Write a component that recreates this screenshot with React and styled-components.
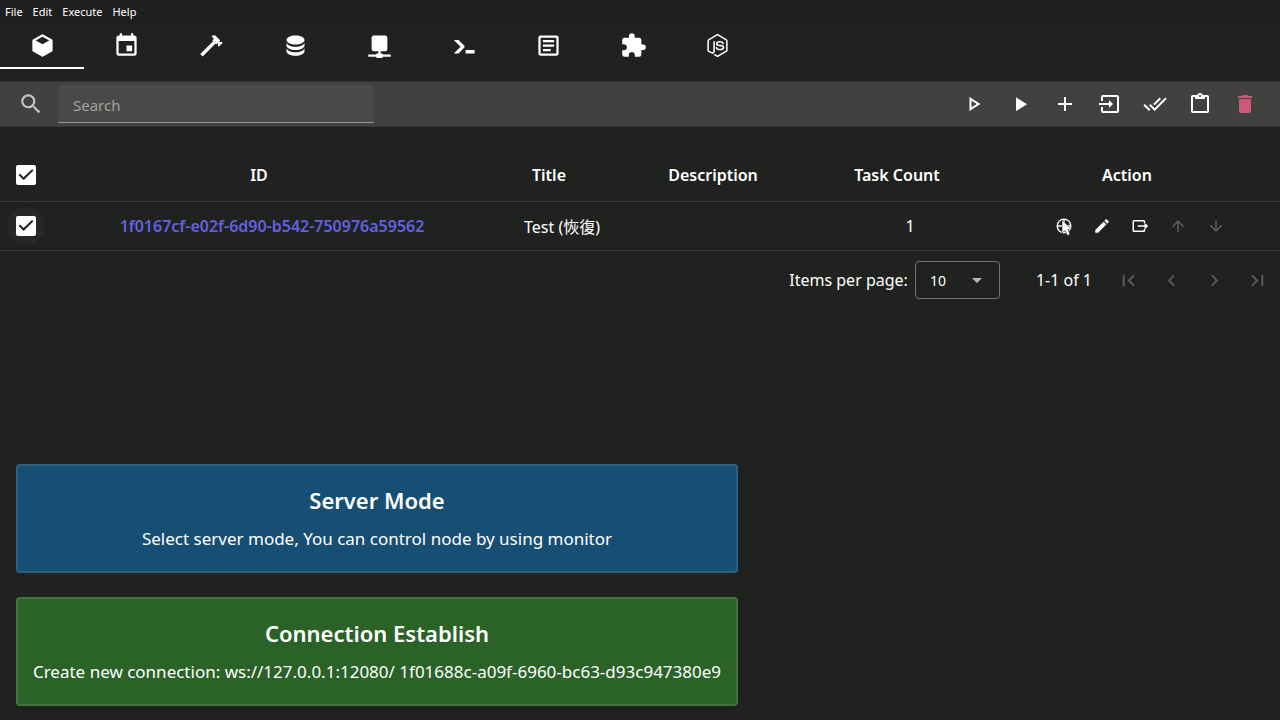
import React from "react";
import styled, { createGlobalStyle } from "styled-components";

const GlobalStyle = createGlobalStyle`
  *, *::before, *::after { box-sizing: border-box; }
  body {
    margin: 0;
    background: #20221f;
    color: #fff;
    font-family: "Noto Sans", "Noto Sans CJK TC", sans-serif;
    font-size: 16px;
  }
  button, input, select { font: inherit; color: inherit; }
`;

const paths = {
  cube: "M21,16.5C21,16.88 20.79,17.21 20.47,17.38L12.57,21.82C12.41,21.94 12.21,22 12,22C11.79,22 11.59,21.94 11.43,21.82L3.53,17.38C3.21,17.21 3,16.88 3,16.5V7.5C3,7.12 3.21,6.79 3.53,6.62L11.43,2.18C11.59,2.06 11.79,2 12,2C12.21,2 12.41,2.06 12.57,2.18L20.47,6.62C20.79,6.79 21,7.12 21,7.5V16.5M12,4.15L6.04,7.5L12,10.85L17.96,7.5L12,4.15Z",
  calendar: "M19,19H5V8H19M16,1V3H8V1H6V3H5C3.89,3 3,3.89 3,5V19A2,2 0 0,0 5,21H19A2,2 0 0,0 21,19V5C21,3.89 20.1,3 19,3H18V1M17,12H12V17H17V12Z",
  hammer: "M2,19.63L13.43,8.2L12.72,7.5L14.14,6.07L12,3.89C13.2,2.7 15.09,2.7 16.27,3.89L19.87,7.5L18.45,8.91H21.29L22,9.62L18.45,13.21L17.74,12.5V9.62L16.27,11.04L15.56,10.33L4.13,21.76L2,19.63Z",
  database: "M12,3C7.58,3 4,4.79 4,7C4,9.21 7.58,11 12,11C16.42,11 20,9.21 20,7C20,4.79 16.42,3 12,3M4,9V12C4,14.21 7.58,16 12,16C16.42,16 20,14.21 20,12V9C20,11.21 16.42,13 12,13C7.58,13 4,11.21 4,9M4,14V17C4,19.21 7.58,21 12,21C16.42,21 20,19.21 20,17V14C20,16.21 16.42,18 12,18C7.58,18 4,16.21 4,14Z",
  network: "M17,3A2,2 0 0,1 19,5V15A2,2 0 0,1 17,17H13V19H14A1,1 0 0,1 15,20H22V22H15A1,1 0 0,1 14,23H10A1,1 0 0,1 9,22H2V20H9A1,1 0 0,1 10,19H11V17H7C5.89,17 5,16.1 5,15V5A2,2 0 0,1 7,3H17Z",
  console: "M13,19V16H21V19H13M8.5,13L2.47,7H6.71L11.67,11.95C12.25,12.54 12.25,13.5 11.67,14.07L6.74,19H2.5L8.5,13Z",
  log: "M5,3C3.89,3 3,3.89 3,5V19C3,20.11 3.89,21 5,21H19C20.11,21 21,20.11 21,19V5C21,3.89 20.11,3 19,3H5M5,5H19V19H5V5M7,7V9H17V7H7M7,11V13H17V11H7M7,15V17H14V15H7Z",
  puzzle: "M20.5,11H19V7C19,5.89 18.1,5 17,5H13V3.5A2.5,2.5 0 0,0 10.5,1A2.5,2.5 0 0,0 8,3.5V5H4A2,2 0 0,0 2,7V10.8H3.5C5,10.8 6.2,12 6.2,13.5C6.2,15 5,16.2 3.5,16.2H2V20A2,2 0 0,0 4,22H7.8V20.5C7.8,19 9,17.8 10.5,17.8C12,17.8 13.2,19 13.2,20.5V22H17A2,2 0 0,0 19,20V16H20.5A2.5,2.5 0 0,0 23,13.5A2.5,2.5 0 0,0 20.5,11Z",
  nodejs: "M12,1.85C11.73,1.85 11.45,1.92 11.22,2.05L3.78,6.35C3.3,6.63 3,7.15 3,7.71V16.29C3,16.85 3.3,17.37 3.78,17.65L5.73,18.77C6.68,19.23 7,19.24 7.44,19.24C8.84,19.24 9.65,18.39 9.65,16.91V8.44C9.65,8.32 9.55,8.22 9.43,8.22H8.5C8.37,8.22 8.27,8.32 8.27,8.44V16.91C8.27,17.57 7.59,18.22 6.5,17.67L4.45,16.5C4.38,16.45 4.34,16.37 4.34,16.29V7.71C4.34,7.62 4.38,7.54 4.45,7.5L11.89,3.21C11.95,3.17 12.05,3.17 12.11,3.21L19.55,7.5C19.62,7.54 19.66,7.62 19.66,7.71V16.29C19.66,16.37 19.62,16.46 19.55,16.5L12.11,20.79C12.05,20.83 11.95,20.83 11.88,20.79L10,19.65C9.92,19.62 9.84,19.61 9.79,19.64C9.26,19.94 9.16,20 8.67,20.14C8.55,20.18 8.36,20.26 8.74,20.47L11.22,21.94C11.46,22.08 11.72,22.15 12,22.15C12.28,22.15 12.54,22.08 12.78,21.94L20.22,17.65C20.7,17.37 21,16.85 21,16.29V7.71C21,7.15 20.7,6.63 20.22,6.35L12.78,2.05C12.55,1.92 12.28,1.85 12,1.85M14,8C11.88,8 10.61,8.89 10.61,10.39C10.61,12 11.87,12.47 13.91,12.67C16.34,12.91 16.53,13.27 16.53,13.75C16.53,14.58 15.86,14.93 14.3,14.93C12.32,14.93 11.9,14.44 11.75,13.46C11.73,13.36 11.64,13.28 11.53,13.28H10.57C10.45,13.28 10.36,13.37 10.36,13.5C10.36,14.74 11.04,16.24 14.3,16.24C16.65,16.24 18,15.31 18,13.69C18,12.08 16.92,11.66 14.63,11.35C12.32,11.05 12.09,10.89 12.09,10.35C12.09,9.9 12.29,9.3 14,9.3C15.5,9.3 16.09,9.63 16.32,10.66C16.34,10.76 16.43,10.83 16.53,10.83H17.5C17.55,10.83 17.61,10.81 17.65,10.76C17.69,10.72 17.72,10.66 17.7,10.6C17.56,8.82 16.38,8 14,8Z",
  magnify: "M9.5,3A6.5,6.5 0 0,1 16,9.5C16,11.11 15.41,12.59 14.44,13.73L14.71,14H15.5L20.5,19L19,20.5L14,15.5V14.71L13.73,14.44C12.59,15.41 11.11,16 9.5,16A6.5,6.5 0 0,1 3,9.5A6.5,6.5 0 0,1 9.5,3M9.5,5C7,5 5,7 5,9.5C5,12 7,14 9.5,14C12,14 14,12 14,9.5C14,7 12,5 9.5,5Z",
  playOutline: "M8.5,8.64L13.77,12L8.5,15.36V8.64M6.5,5V19L17.5,12",
  play: "M8,5.14V19.14L19,12.14L8,5.14Z",
  plus: "M19,13H13V19H11V13H5V11H11V5H13V11H19V13Z",
  enter: "M19,3H5C3.89,3 3,3.89 3,5V9H5V5H19V19H5V15H3V19A2,2 0 0,0 5,21H19A2,2 0 0,0 21,19V5C21,3.89 20.1,3 19,3M11,16L15,12L11,8V11H1V13H11V16Z",
  checkAll: "M0.41,13.41L6,19L7.41,17.58L1.83,12M22.24,5.58L11.66,16.17L7.5,12L6.07,13.41L11.66,19L23.66,7M18,7L16.59,5.58L10.24,11.93L11.66,13.34L18,7Z",
  clipboard: "M19,3H14.82C14.4,1.84 13.3,1 12,1C10.7,1 9.6,1.84 9.18,3H5A2,2 0 0,0 3,5V19A2,2 0 0,0 5,21H19A2,2 0 0,0 21,19V5A2,2 0 0,0 19,3M12,3A1,1 0 0,1 13,4A1,1 0 0,1 12,5A1,1 0 0,1 11,4A1,1 0 0,1 12,3M7,7H17V5H19V19H5V5H7V7Z",
  trash: "M19,4H15.5L14.5,3H9.5L8.5,4H5V6H19M6,19A2,2 0 0,0 8,21H16A2,2 0 0,0 18,19V7H6V19Z",
  target: "M12,2A10,10 0 1,0 12,22A10,10 0 1,0 12,2M13,4.1A8,8 0 0,1 19.9,11H13V4.1M11,4.1V11H4.1A8,8 0 0,1 11,4.1M4.1,13H11V19.9A8,8 0 0,1 4.1,13M13,19.9V13H19.9A8,8 0 0,1 13,19.9Z",
  pencil: "M20.71,7.04C21.1,6.65 21.1,6 20.71,5.63L18.37,3.29C18,2.9 17.35,2.9 16.96,3.29L15.12,5.12L18.87,8.87M3,17.25V21H6.75L17.81,9.93L14.06,6.18L3,17.25Z",
  exit: "M19,16V18A2,2 0 0,1 17,20H4A2,2 0 0,1 2,18V6A2,2 0 0,1 4,4H17A2,2 0 0,1 19,6V8H17V6H4V18H17V16H19M18,16.5V13H9V11H18V7.5L23,12L18,16.5Z",
  arrowUp: "M13,20H11V8L5.5,13.5L4.08,12.08L12,4.16L19.92,12.08L18.5,13.5L13,8V20Z",
  arrowDown: "M11,4H13V16L18.5,10.5L19.92,11.92L12,19.84L4.08,11.92L5.5,10.5L11,16V4Z",
  first: "M18.41,16.59L13.82,12L18.41,7.41L17,6L11,12L17,18L18.41,16.59M6,6H8V18H6V6Z",
  left: "M15.41,16.58L10.83,12L15.41,7.41L14,6L8,12L14,18L15.41,16.58Z",
  right: "M8.59,16.58L13.17,12L8.59,7.41L10,6L16,12L10,18L8.59,16.58Z",
  last: "M5.59,7.41L10.18,12L5.59,16.59L7,18L13,12L7,6L5.59,7.41M16,6H18V18H16V6Z",
  menuDown: "M7,10L12,15L17,10H7Z",
};

const Svg = styled.svg`
  display: block;
  flex: none;
  width: ${(p) => p.$size}px;
  height: ${(p) => p.$size}px;
  fill: currentColor;
  pointer-events: none;
`;
const Icon = ({ name, size = 24 }) => (
  <Svg $size={size} viewBox="0 0 24 24" aria-hidden="true">
    <path d={paths[name]} />
  </Svg>
);

const Page = styled.div`
  display: flex;
  flex-direction: column;
  min-height: 100vh;
`;
const MenuBar = styled.nav`
  display: flex;
  height: 24px;
  background: #1e201d;
`;
const MenuItem = styled.button`
  padding: 0 5px;
  border: 0;
  background: none;
  font-size: 11px;
  line-height: 22px;
`;
const Tabs = styled.nav`
  display: flex;
  width: 100%;
  max-width: 760px;
  height: 45px;
`;
const Tab = styled.button`
  flex: 1;
  display: flex;
  align-items: center;
  justify-content: center;
  padding: 0;
  border: 0;
  border-bottom: 2px solid ${(p) => (p.$active ? "#fff" : "transparent")};
  background: none;
`;
const Toolbar = styled.header`
  display: flex;
  align-items: center;
  height: 46px;
  margin-top: 12px;
  padding: 0 13px 0 18px;
  background: #40423f;
  border: solid #343633;
  border-width: 1px 0;
`;
const SearchLabel = styled.label`
  display: flex;
  align-items: center;
  gap: 14px;
  flex: 0 1 356px;
  color: #c4c5c4;
`;
const SearchInput = styled.input`
  flex: 1;
  min-width: 0;
  height: 38px;
  padding: 2px 15px 0;
  border: 0;
  border-bottom: 1px solid #949594;
  border-radius: 4px 4px 0 0;
  background: #494b48;
  color: #fff;
  font-size: 15px;
  outline: none;
  &::placeholder { color: #a0a19f; opacity: 1; }
`;
const ToolGroup = styled.div`
  display: flex;
  margin-left: auto;
`;
const ToolButton = styled.button`
  display: flex;
  align-items: center;
  justify-content: center;
  width: 45px;
  height: 44px;
  padding: 0;
  border: 0;
  background: none;
  color: ${(p) => (p.$danger ? "#cb5a7a" : "#fff")};
`;
const Table = styled.table`
  width: 100%;
  margin-top: 22px;
  border-collapse: collapse;
  table-layout: fixed;
`;
const Col = styled.col`
  width: ${(p) => p.$w}px;
`;
const HeadCell = styled.th`
  height: 52px;
  padding: 0 ${(p) => (p.$sortable ? 26 : 0)}px 0 0;
  border-bottom: 1px solid #393b38;
  font-weight: 600;
`;
const Cell = styled.td`
  height: 49px;
  padding: 0;
  border-bottom: 1px solid #393b38;
  text-align: center;
`;
const CheckHolder = styled.label`
  display: flex;
  align-items: center;
  justify-content: center;
  width: 38px;
  height: 38px;
  margin-left: 7px;
  border-radius: 50%;
  background: ${(p) => (p.$hover ? "#262825" : "none")};
`;
const Check = styled.input`
  appearance: none;
  width: 20px;
  height: 20px;
  margin: 0;
  border-radius: 2px;
  background: #fff;
  display: grid;
  place-items: center;
  &:checked::before {
    content: "";
    width: 15px;
    height: 11px;
    background: #20221f;
    clip-path: polygon(0 52%, 10% 40%, 34% 72%, 90% 0, 100% 11%, 34% 100%);
  }
`;
const IdLink = styled.a`
  color: #6461e0;
  font-weight: 600;
  text-decoration: none;
`;
const Actions = styled.div`
  display: flex;
  justify-content: center;
`;
const ActionSlot = styled.div`
  position: relative;
  flex: 0 0 38px;
`;
const ActionButton = styled.button`
  display: flex;
  align-items: center;
  justify-content: center;
  width: 100%;
  height: 38px;
  padding: 0;
  border: 0;
  background: none;
  color: #fff;
  &:disabled { color: #5b5d5a; }
`;
const Pointer = styled.svg`
  position: absolute;
  left: 16px;
  top: 12px;
  width: 14px;
  height: 18px;
`;
const Footer = styled.footer`
  display: flex;
  align-items: center;
  justify-content: flex-end;
  height: 59px;
  padding-right: 1px;
`;
const PerPage = styled.label`
  display: flex;
  align-items: center;
  gap: 7px;
`;
const SelectBox = styled.span`
  display: grid;
  align-items: center;
  width: 85px;
  height: 38px;
  border: 1px solid #737472;
  border-radius: 4px;
  color: #b9bab8;
  > * { grid-area: 1 / 1; }
  > svg { justify-self: end; margin-right: 10px; }
`;
const Select = styled.select`
  appearance: none;
  width: 100%;
  height: 36px;
  padding: 0 14px;
  border: 0;
  background: none;
  color: #fff;
  font-size: 14px;
`;
const PageInfo = styled.span`
  margin: 0 15px 0 36px;
`;
const Pager = styled.div`
  display: flex;
`;
const PagerButton = styled(ActionButton)`
  width: 43px;
`;
const Alerts = styled.section`
  display: flex;
  flex-direction: column;
  gap: 24px;
  width: 722px;
  max-width: calc(100% - 32px);
  margin: auto 0 14px 16px;
`;
const Alert = styled.article`
  padding: 18px 12px;
  border: 2px solid ${(p) => (p.$kind === "info" ? "#2e6083" : "#41753f")};
  border-radius: 4px;
  background: ${(p) => (p.$kind === "info" ? "#164e74" : "#2a6228")};
  text-align: center;
`;
const AlertTitle = styled.h2`
  margin: 0 0 9px;
  font-size: 22px;
  font-weight: 600;
  line-height: 32px;
`;
const AlertText = styled.p`
  margin: 0;
  font-size: 17px;
  line-height: 28px;
`;

const tabs = [
  ["cube", "Projects"], ["calendar", "Tasks"], ["hammer", "Jobs"], ["database", "Parameters"], ["network", "Nodes"],
  ["console", "Console"], ["log", "Logs"], ["puzzle", "Plugins"], ["nodejs", "Node.js"],
];
const tools = [
  ["playOutline", "Step"], ["play", "Run"], ["plus", "Add"], ["enter", "Import"],
  ["checkAll", "Select all"], ["clipboard", "Copy"], ["trash", "Delete"],
];
const actions = [
  ["target", "Set target"], ["pencil", "Edit"], ["exit", "Export"], ["arrowUp", "Move up", true], ["arrowDown", "Move down", true],
];
const pages = [["first", "First page"], ["left", "Previous page"], ["right", "Next page"], ["last", "Last page"]];
const alerts = [
  { kind: "info", title: "Server Mode", text: "Select server mode, You can control node by using monitor" },
  { kind: "success", title: "Connection Establish", text: "Create new connection: ws://127.0.0.1:12080/ 1f01688c-a09f-6960-bc63-d93c947380e9" },
];

export default function App() {
  return (
    <Page>
      <GlobalStyle />
      <MenuBar>
        {["File", "Edit", "Execute", "Help"].map((m) => <MenuItem key={m}>{m}</MenuItem>)}
      </MenuBar>
      <Tabs>
        {tabs.map(([icon, label], i) => (
          <Tab key={icon} $active={i === 0} aria-label={label}><Icon name={icon} size={27} /></Tab>
        ))}
      </Tabs>
      <Toolbar>
        <SearchLabel>
          <Icon name="magnify" size={26} />
          <SearchInput type="text" placeholder="Search" aria-label="Search" />
        </SearchLabel>
        <ToolGroup>
          {tools.map(([icon, label]) => (
            <ToolButton key={icon} aria-label={label} $danger={icon === "trash"}><Icon name={icon} /></ToolButton>
          ))}
        </ToolGroup>
      </Toolbar>
      <Table>
        <colgroup>
          {[52, 440, 140, 188, 180, 280].map((w, i) => <Col key={i} $w={w} />)}
        </colgroup>
        <thead>
          <tr>
            <HeadCell><CheckHolder><Check type="checkbox" defaultChecked aria-label="Select all rows" /></CheckHolder></HeadCell>
            {["ID", "Title", "Description", "Task Count", "Action"].map((h) => <HeadCell key={h} $sortable>{h}</HeadCell>)}
          </tr>
        </thead>
        <tbody>
          <tr>
            <Cell><CheckHolder $hover><Check type="checkbox" defaultChecked aria-label="Select row" /></CheckHolder></Cell>
            <Cell><IdLink href="#project">1f0167cf-e02f-6d90-b542-750976a59562</IdLink></Cell>
            <Cell>Test (恢復)</Cell>
            <Cell />
            <Cell>1</Cell>
            <Cell>
              <Actions>
                {actions.map(([icon, label, off]) => (
                  <ActionSlot key={icon}>
                    <ActionButton aria-label={label} disabled={off}><Icon name={icon} size={18} /></ActionButton>
                    {icon === "target" && (
                      <Pointer viewBox="0 0 14 18" aria-hidden="true">
                        <path d="M1 1V14L4 11.5L6.5 16.5L9 15.3L6.8 10.6H11Z" fill="#fff" stroke="#20221f" strokeWidth="0.5" />
                      </Pointer>
                    )}
                  </ActionSlot>
                ))}
              </Actions>
            </Cell>
          </tr>
        </tbody>
      </Table>
      <Footer>
        <PerPage>
          Items per page:
          <SelectBox>
            <Icon name="menuDown" />
            <Select defaultValue="10"><option>10</option></Select>
          </SelectBox>
        </PerPage>
        <PageInfo>1-1 of 1</PageInfo>
        <Pager>
          {pages.map(([icon, label]) => (
            <PagerButton key={icon} disabled aria-label={label}><Icon name={icon} size={23} /></PagerButton>
          ))}
        </Pager>
      </Footer>
      <Alerts>
        {alerts.map((a) => (
          <Alert key={a.kind} $kind={a.kind} role="status">
            <AlertTitle>{a.title}</AlertTitle>
            <AlertText>{a.text}</AlertText>
          </Alert>
        ))}
      </Alerts>
    </Page>
  );
}
